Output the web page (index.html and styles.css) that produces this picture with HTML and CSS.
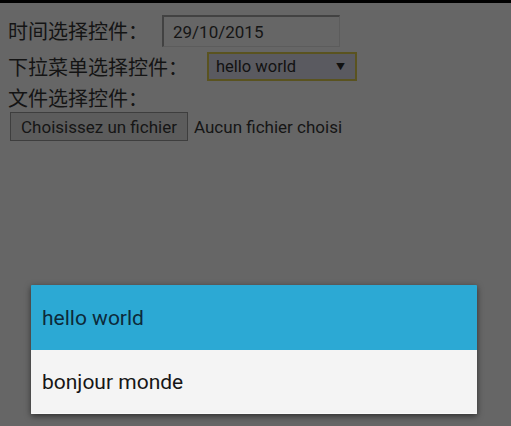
FILE: index.html
```html
<!DOCTYPE html>
<html lang="zh">
<head>
<meta charset="utf-8">
<title>表单控件</title>
<link rel="stylesheet" href="styles.css">
</head>
<body>
<div class="statusbar"></div>
<main class="form">
  <div class="row row-date">
    <span class="label">时间选择控件：</span>
    <span class="date-input">29/10/2015</span>
  </div>
  <div class="row row-select">
    <span class="label">下拉菜单选择控件：</span>
    <span class="select"><span class="select-text">hello world</span><span class="select-arrow">▼</span></span>
  </div>
  <div class="row row-label">
    <span class="label">文件选择控件：</span>
  </div>
  <div class="row row-file">
    <span class="file-button">Choisissez un fichier</span>
    <span class="file-status">Aucun fichier choisi</span>
  </div>
</main>
<div class="popup">
  <div class="option option-selected">hello world</div>
  <div class="option">bonjour monde</div>
</div>
</body>
</html>
```
FILE: styles.css
```css
html, body {
  margin: 0;
  padding: 0;
}
body {
  background: #666666;
  width: 511px;
  height: 426px;
  overflow: hidden;
  font-family: Roboto, "Noto Sans CJK SC", sans-serif;
  color: #111111;
}
.statusbar {
  height: 3px;
  background: #000000;
}
.form {
  padding: 0 0 0 8px;
  display: flex;
  flex-direction: column;
}
.row {
  display: flex;
  align-items: center;
}
.label {
  font-family: "Noto Sans CJK SC", sans-serif;
  font-size: 20px;
  line-height: 24px;
  color: #141414;
}
.row-date {
  margin-top: 12px;
  height: 32px;
}
.date-input {
  box-sizing: border-box;
  margin-left: 14px;
  width: 178px;
  height: 32px;
  border-style: solid;
  border-width: 2px 1px 1px 2px;
  border-color: #424242 #5c5c5c #5c5c5c #424242;
  padding-left: 9px;
  font-size: 17px;
  display: flex;
  align-items: center;
  color: #151515;
}
.row-select {
  margin-top: 5px;
  height: 29px;
}
.select {
  box-sizing: border-box;
  margin-left: 19px;
  width: 150px;
  height: 29px;
  border: 2px solid #5a5320;
  background: #5a5a60;
  display: flex;
  align-items: center;
  justify-content: space-between;
  padding: 0 10px 0 7px;
  font-size: 16.5px;
  color: #121212;
}
.select-arrow {
  font-size: 9px;
  color: #111111;
}
.row-label {
  margin-top: 4px;
  height: 26px;
}
.row-file {
  margin-top: 1px;
  height: 29px;
}
.file-button {
  box-sizing: border-box;
  margin-left: 2px;
  width: 178px;
  height: 29px;
  border: 1px solid #3e3e3e;
  background: #5c5c5c;
  font-size: 17px;
  display: flex;
  align-items: center;
  justify-content: center;
  color: #151515;
}
.file-status {
  margin-left: 6px;
  font-size: 17px;
  color: #151515;
}
.popup {
  position: absolute;
  left: 31px;
  top: 285px;
  width: 446px;
  box-shadow: 0 2px 6px rgba(0, 0, 0, 0.55);
  border-radius: 1px;
  overflow: hidden;
}
.option {
  height: 63px;
  display: flex;
  align-items: center;
  padding-left: 11px;
  font-size: 21px;
  background: #f4f4f4;
  color: #161616;
  border-bottom: 1px solid #fafafa;
}
.option-selected {
  height: 65px;
  background: #2ca9d4;
  color: #0c2a3a;
  border-bottom: none;
}
```
